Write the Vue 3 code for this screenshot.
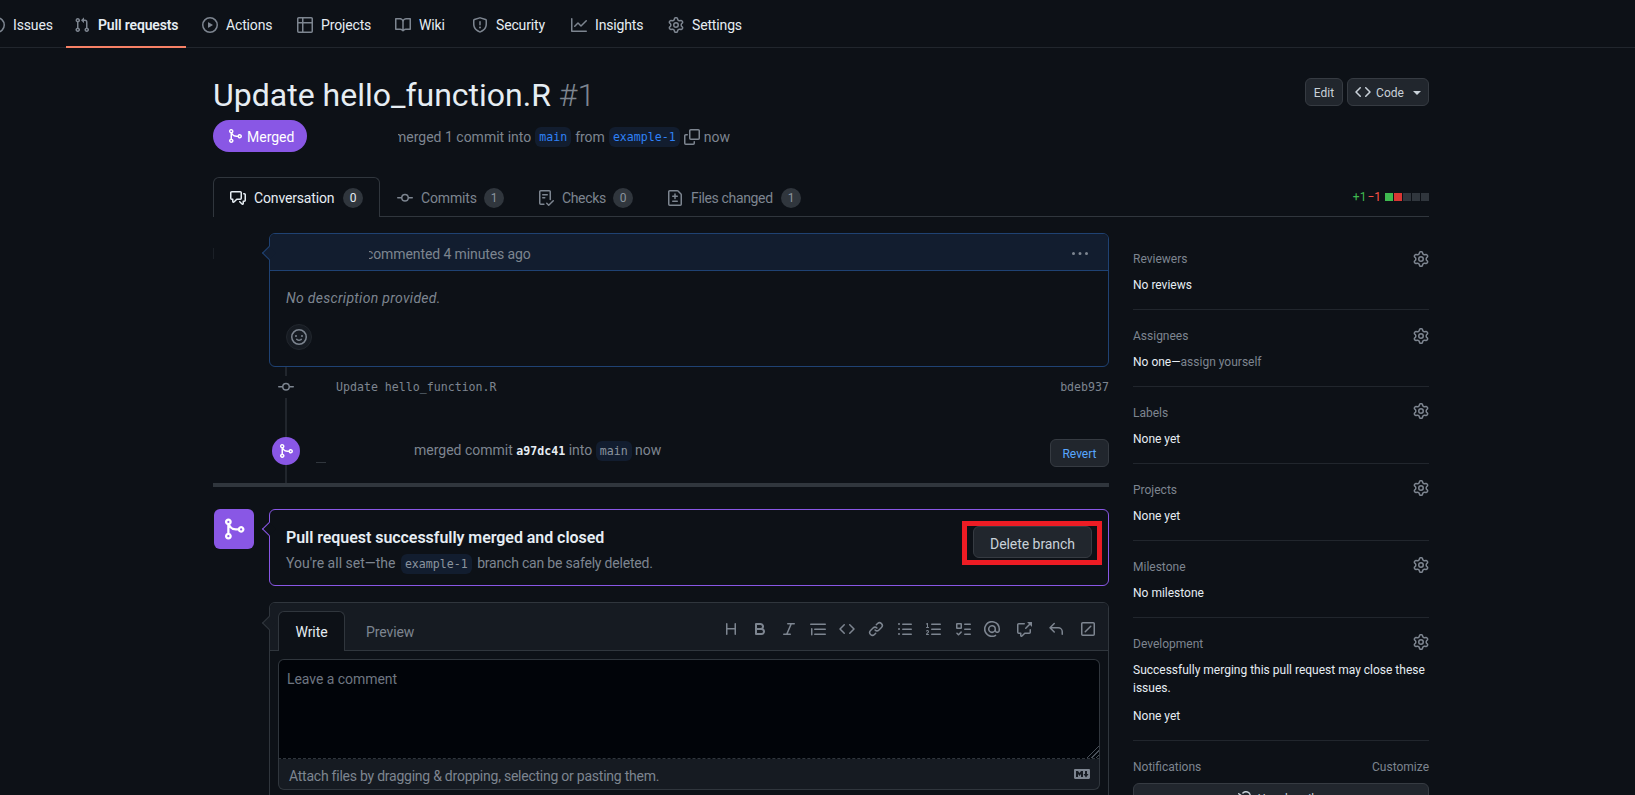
<script setup>
import { h } from 'vue'

const icons = {
  issue: 'M8 9.5a1.5 1.5 0 1 0 0-3 1.5 1.5 0 0 0 0 3Z M8 0a8 8 0 1 1 0 16A8 8 0 0 1 8 0ZM1.5 8a6.5 6.5 0 1 0 13 0 6.5 6.5 0 0 0-13 0Z',
  pull: 'M1.5 3.25a2.25 2.25 0 1 1 3 2.122v5.256a2.251 2.251 0 1 1-1.5 0V5.372A2.25 2.25 0 0 1 1.5 3.25Zm5.677-.177L9.573.677A.25.25 0 0 1 10 .854V2.5h1A2.5 2.5 0 0 1 13.5 5v5.628a2.251 2.251 0 1 1-1.5 0V5a1 1 0 0 0-1-1h-1v1.646a.25.25 0 0 1-.427.177L7.177 3.427a.25.25 0 0 1 0-.354ZM3.75 2.5a.75.75 0 1 0 0 1.5.75.75 0 0 0 0-1.5Zm0 9.5a.75.75 0 1 0 0 1.5.75.75 0 0 0 0-1.5Zm8.25.75a.75.75 0 1 0 1.5 0 .75.75 0 0 0-1.5 0Z',
  play: 'M8 0a8 8 0 1 1 0 16A8 8 0 0 1 8 0ZM1.5 8a6.5 6.5 0 1 0 13 0 6.5 6.5 0 0 0-13 0Zm4.879-2.773 4.264 2.559a.25.25 0 0 1 0 .428l-4.264 2.559A.25.25 0 0 1 6 10.559V5.442a.25.25 0 0 1 .379-.215Z',
  table: 'M0 1.75C0 .784.784 0 1.75 0h12.5C15.216 0 16 .784 16 1.75v12.5A1.75 1.75 0 0 1 14.25 16H1.75A1.75 1.75 0 0 1 0 14.25ZM6.5 6.5v8h7.75a.25.25 0 0 0 .25-.25V6.5Zm8-1.5V1.75a.25.25 0 0 0-.25-.25H6.5V5Zm-13 1.5v7.75c0 .138.112.25.25.25H5v-8ZM5 5V1.5H1.75a.25.25 0 0 0-.25.25V5Z',
  book: 'M0 1.75A.75.75 0 0 1 .75 1h4.253c1.227 0 2.317.59 3 1.501A3.743 3.743 0 0 1 11.006 1h4.245a.75.75 0 0 1 .75.75v10.5a.75.75 0 0 1-.75.75h-4.507a2.25 2.25 0 0 0-1.591.659l-.622.621a.75.75 0 0 1-1.06 0l-.622-.621A2.25 2.25 0 0 0 5.258 13H.75a.75.75 0 0 1-.75-.75Zm7.251 10.324.004-5.073-.002-2.253A2.25 2.25 0 0 0 5.003 2.5H1.5v9h3.757a3.75 3.75 0 0 1 1.994.574ZM8.755 4.75l-.004 7.322a3.752 3.752 0 0 1 1.992-.572H14.5v-9h-3.495a2.25 2.25 0 0 0-2.25 2.25Z',
  shield: 'M7.467.133a1.748 1.748 0 0 1 1.066 0l5.25 1.68A1.75 1.75 0 0 1 15 3.48V7c0 1.566-.32 3.182-1.303 4.682-.983 1.498-2.585 2.813-5.032 3.855a1.697 1.697 0 0 1-1.33 0c-2.447-1.042-4.049-2.357-5.032-3.855C1.32 10.182 1 8.566 1 7V3.48a1.75 1.75 0 0 1 1.217-1.667Zm.61 1.429a.25.25 0 0 0-.153 0l-5.25 1.68a.25.25 0 0 0-.174.238V7c0 1.358.275 2.666 1.057 3.86.784 1.194 2.121 2.34 4.366 3.297a.196.196 0 0 0 .154 0c2.245-.956 3.582-2.104 4.366-3.298C13.225 9.666 13.5 8.36 13.5 7V3.48a.251.251 0 0 0-.174-.237l-5.25-1.68ZM8.75 4.75v3a.75.75 0 0 1-1.5 0v-3a.75.75 0 0 1 1.5 0ZM9 10.5a1 1 0 1 1-2 0 1 1 0 0 1 2 0Z',
  graph: 'M1.5 1.75V13.5h13.75a.75.75 0 0 1 0 1.5H.75a.75.75 0 0 1-.75-.75V1.75a.75.75 0 0 1 1.5 0Zm14.28 2.53-5.25 5.25a.75.75 0 0 1-1.06 0L7 7.06 4.28 9.78a.751.751 0 0 1-1.042-.018.751.751 0 0 1-.018-1.042l3.25-3.25a.75.75 0 0 1 1.06 0L10 7.94l4.72-4.72a.751.751 0 0 1 1.042.018.751.751 0 0 1 .018 1.042Z',
  gear: 'M8 0a8.2 8.2 0 0 1 .701.031C9.444.095 9.99.645 10.16 1.29l.288 1.107c.018.066.079.158.212.224.231.114.454.243.668.386.123.082.233.09.299.071l1.103-.303c.644-.176 1.392.021 1.82.63.27.385.506.792.704 1.218.315.675.111 1.422-.364 1.891l-.814.806c-.049.048-.098.147-.088.294.016.257.016.515 0 .772-.01.147.038.246.088.294l.814.806c.475.469.679 1.216.364 1.891a7.977 7.977 0 0 1-.704 1.217c-.428.61-1.176.807-1.82.63l-1.102-.302c-.067-.019-.177-.011-.3.071a5.909 5.909 0 0 1-.668.386c-.133.066-.194.158-.211.224l-.29 1.106c-.168.646-.715 1.196-1.458 1.26a8.006 8.006 0 0 1-1.402 0c-.743-.064-1.289-.614-1.458-1.26l-.289-1.106c-.018-.066-.079-.158-.212-.224a5.738 5.738 0 0 1-.668-.386c-.123-.082-.233-.09-.299-.071l-1.103.303c-.644.176-1.392-.021-1.82-.63a8.12 8.12 0 0 1-.704-1.218c-.315-.675-.111-1.422.363-1.891l.815-.806c.05-.048.098-.147.088-.294a6.214 6.214 0 0 1 0-.772c.01-.147-.038-.246-.088-.294l-.815-.806C.635 6.045.431 5.298.746 4.623a7.92 7.92 0 0 1 .704-1.217c.428-.61 1.176-.807 1.82-.63l1.102.302c.067.019.177.011.3-.071.214-.143.437-.272.668-.386.133-.066.194-.158.211-.224l.29-1.106C6.009.645 6.556.095 7.299.03 7.53.01 7.764 0 8 0Zm-.571 1.525c-.036.003-.108.036-.137.146l-.289 1.105c-.147.561-.549.967-.998 1.189-.173.086-.34.183-.5.29-.417.278-.97.423-1.529.27l-1.103-.303c-.109-.03-.175.016-.195.045-.22.312-.412.644-.573.99-.014.031-.021.11.059.19l.815.806c.411.406.562.957.53 1.456a4.709 4.709 0 0 0 0 .582c.032.499-.119 1.05-.53 1.456l-.815.806c-.081.08-.073.159-.059.19.162.346.353.677.573.989.02.03.085.076.195.046l1.102-.303c.56-.153 1.113-.008 1.53.27.161.107.328.204.501.29.447.222.85.629.997 1.189l.289 1.105c.029.109.101.143.137.146a6.6 6.6 0 0 0 1.142 0c.036-.003.108-.036.137-.146l.289-1.105c.147-.561.549-.967.998-1.189.173-.086.34-.183.5-.29.417-.278.97-.423 1.529-.27l1.103.303c.109.029.175-.016.195-.045.22-.313.411-.644.573-.99.014-.031.021-.11-.059-.19l-.815-.806c-.411-.406-.562-.957-.53-1.456a4.709 4.709 0 0 0 0-.582c-.032-.499.119-1.05.53-1.456l.815-.806c.081-.08.073-.159.059-.19a6.464 6.464 0 0 0-.573-.989c-.02-.03-.085-.076-.195-.046l-1.102.303c-.56.153-1.113.008-1.53-.27a4.44 4.44 0 0 0-.501-.29c-.447-.222-.85-.629-.997-1.189l-.289-1.105c-.029-.11-.101-.143-.137-.146a6.6 6.6 0 0 0-1.142 0ZM11 8a3 3 0 1 1-6 0 3 3 0 0 1 6 0ZM9.5 8a1.5 1.5 0 1 0-3.001.001A1.5 1.5 0 0 0 9.5 8Z',
  code: 'm11.28 3.22 4.25 4.25a.75.75 0 0 1 0 1.06l-4.25 4.25a.749.749 0 0 1-1.275-.326.749.749 0 0 1 .215-.734L13.94 8l-3.72-3.72a.749.749 0 0 1 .326-1.275.749.749 0 0 1 .734.215Zm-6.56 0a.751.751 0 0 1 1.042.018.751.751 0 0 1 .018 1.042L2.06 8l3.72 3.72a.749.749 0 0 1-.326 1.275.749.749 0 0 1-.734-.215L.47 8.53a.75.75 0 0 1 0-1.06Z',
  merge: 'M5.45 5.154A4.25 4.25 0 0 0 9.25 7.5h1.378a2.251 2.251 0 1 1 0 1.5H9.25A5.734 5.734 0 0 1 5 7.123v3.505a2.25 2.25 0 1 1-1.5 0V5.372a2.25 2.25 0 1 1 1.95-.218ZM4.25 13.5a.75.75 0 1 0 0-1.5.75.75 0 0 0 0 1.5Zm8.5-4.5a.75.75 0 1 0 0-1.5.75.75 0 0 0 0 1.5ZM5 3.25a.75.75 0 1 0 0 .005V3.25Z',
  discussion: 'M1.75 1h8.5c.966 0 1.75.784 1.75 1.75v5.5A1.75 1.75 0 0 1 10.25 10H7.061l-2.574 2.573A1.458 1.458 0 0 1 2 11.543V10h-.25A1.75 1.75 0 0 1 0 8.25v-5.5C0 1.784.784 1 1.75 1ZM1.5 2.75v5.5c0 .138.112.25.25.25h1a.75.75 0 0 1 .75.75v2.19l2.72-2.72a.749.749 0 0 1 .53-.22h3.5a.25.25 0 0 0 .25-.25v-5.5a.25.25 0 0 0-.25-.25h-8.5a.25.25 0 0 0-.25.25Zm13 2a.25.25 0 0 0-.25-.25h-.5a.75.75 0 0 1 0-1.5h.5c.966 0 1.75.784 1.75 1.75v5.5A1.75 1.75 0 0 1 14.25 12H14v1.543a1.458 1.458 0 0 1-2.487 1.03L9.22 12.28a.749.749 0 0 1 .326-1.275.749.749 0 0 1 .734.215l2.22 2.22v-2.19a.75.75 0 0 1 .75-.75h1a.25.25 0 0 0 .25-.25Z',
  commit: 'M11.93 8.5a4.002 4.002 0 0 1-7.86 0H.75a.75.75 0 0 1 0-1.5h3.32a4.002 4.002 0 0 1 7.86 0h3.32a.75.75 0 0 1 0 1.5Zm-1.43-.75a2.5 2.5 0 1 0-5 0 2.5 2.5 0 0 0 5 0Z',
  checklist: 'M2.5 1.75v11.5c0 .138.112.25.25.25h3.17a.75.75 0 0 1 0 1.5H2.75A1.75 1.75 0 0 1 1 13.25V1.75C1 .784 1.784 0 2.75 0h8.5C12.216 0 13 .784 13 1.75v7.736a.75.75 0 0 1-1.5 0V1.75a.25.25 0 0 0-.25-.25h-8.5a.25.25 0 0 0-.25.25Zm13.274 9.537v-.001l-4.557 4.45a.75.75 0 0 1-1.055-.008l-1.943-1.95a.75.75 0 0 1 1.062-1.058l1.419 1.425 4.026-3.932a.75.75 0 1 1 1.048 1.074ZM4.75 4h4.5a.75.75 0 0 1 0 1.5h-4.5a.75.75 0 0 1 0-1.5ZM4 7.75A.75.75 0 0 1 4.75 7h2a.75.75 0 0 1 0 1.5h-2A.75.75 0 0 1 4 7.75Z',
  filediff: 'M1 1.75C1 .784 1.784 0 2.75 0h7.586c.464 0 .909.184 1.237.513l2.914 2.914c.329.328.513.773.513 1.237v9.586A1.75 1.75 0 0 1 13.25 16H2.75A1.75 1.75 0 0 1 1 14.25Zm1.75-.25a.25.25 0 0 0-.25.25v12.5c0 .138.112.25.25.25h10.5a.25.25 0 0 0 .25-.25V4.664a.25.25 0 0 0-.073-.177l-2.914-2.914a.25.25 0 0 0-.177-.073ZM8 3.25a.75.75 0 0 1 .75.75v1.5h1.5a.75.75 0 0 1 0 1.5h-1.5v1.5a.75.75 0 0 1-1.5 0V7h-1.5a.75.75 0 0 1 0-1.5h1.5V4A.75.75 0 0 1 8 3.25Zm-3 8a.75.75 0 0 1 .75-.75h4.5a.75.75 0 0 1 0 1.5h-4.5a.75.75 0 0 1-.75-.75Z',
  copy: 'M0 6.75C0 5.784.784 5 1.75 5h1.5a.75.75 0 0 1 0 1.5h-1.5a.25.25 0 0 0-.25.25v7.5c0 .138.112.25.25.25h7.5a.25.25 0 0 0 .25-.25v-1.5a.75.75 0 0 1 1.5 0v1.5A1.75 1.75 0 0 1 9.25 16h-7.5A1.75 1.75 0 0 1 0 14.25Z M5 1.75C5 .784 5.784 0 6.75 0h7.5C15.216 0 16 .784 16 1.75v7.5A1.75 1.75 0 0 1 14.25 11h-7.5A1.75 1.75 0 0 1 5 9.25Zm1.75-.25a.25.25 0 0 0-.25.25v7.5c0 .138.112.25.25.25h7.5a.25.25 0 0 0 .25-.25v-7.5a.25.25 0 0 0-.25-.25Z',
  smiley: 'M8 0a8 8 0 1 1 0 16A8 8 0 0 1 8 0ZM1.5 8a6.5 6.5 0 1 0 13 0 6.5 6.5 0 0 0-13 0Zm3.82 1.636a.75.75 0 0 1 1.038.175l.007.009c.103.118.22.222.35.31.264.178.683.37 1.285.37.602 0 1.02-.192 1.285-.371.13-.088.247-.192.35-.31l.007-.008a.75.75 0 0 1 1.222.87l-.022-.015c.02.013.021.015.021.015v.001l-.001.002-.002.003-.005.007-.014.019a2.066 2.066 0 0 1-.184.213c-.16.166-.338.316-.53.445-.63.418-1.37.638-2.127.629-.946 0-1.652-.308-2.126-.63a3.331 3.331 0 0 1-.715-.657l-.014-.02-.005-.006-.002-.003v-.002h-.001l.613-.432-.614.43a.75.75 0 0 1 .183-1.044ZM12 7a1 1 0 1 1-2 0 1 1 0 0 1 2 0ZM5 8a1 1 0 1 1 0-2 1 1 0 0 1 0 2Zm5.25 2.25.592.416a97.71 97.71 0 0 0-.592-.416Z',
  kebab: 'M8 9a1.5 1.5 0 1 0 0-3 1.5 1.5 0 0 0 0 3ZM1.5 9a1.5 1.5 0 1 0 0-3 1.5 1.5 0 0 0 0 3Zm13 0a1.5 1.5 0 1 0 0-3 1.5 1.5 0 0 0 0 3Z',
  heading: 'M3.75 2a.75.75 0 0 1 .75.75V7h7V2.75a.75.75 0 0 1 1.5 0v10.5a.75.75 0 0 1-1.5 0V8.5h-7v4.75a.75.75 0 0 1-1.5 0V2.75A.75.75 0 0 1 3.75 2Z',
  bold: 'M4 2h4.5a3.501 3.501 0 0 1 2.852 5.53A3.499 3.499 0 0 1 9.5 14H4a1 1 0 0 1-1-1V3a1 1 0 0 1 1-1Zm1 7v3h4.5a1.5 1.5 0 0 0 0-3Zm3.5-2a1.5 1.5 0 0 0 0-3H5v3Z',
  italic: 'M6 2.75A.75.75 0 0 1 6.75 2h6.5a.75.75 0 0 1 0 1.5h-2.505l-3.858 9H9.25a.75.75 0 0 1 0 1.5h-6.5a.75.75 0 0 1 0-1.5h2.505l3.858-9H6.75A.75.75 0 0 1 6 2.75Z',
  quote: 'M.75 2.5h14.5a.75.75 0 0 1 0 1.5H.75a.75.75 0 0 1 0-1.5Zm4 5h10.5a.75.75 0 0 1 0 1.5H4.75a.75.75 0 0 1 0-1.5Zm0 5h10.5a.75.75 0 0 1 0 1.5H4.75a.75.75 0 0 1 0-1.5ZM2.5 7.75v6a.75.75 0 0 1-1.5 0v-6a.75.75 0 0 1 1.5 0Z',
  link: 'm7.775 3.275 1.25-1.25a3.5 3.5 0 1 1 4.95 4.95l-2.5 2.5a3.5 3.5 0 0 1-4.95 0 .751.751 0 0 1 .018-1.042.751.751 0 0 1 1.042-.018 1.998 1.998 0 0 0 2.83 0l2.5-2.5a2.002 2.002 0 0 0-2.83-2.83l-1.25 1.25a.751.751 0 0 1-1.042-.018.751.751 0 0 1-.018-1.042Zm-4.69 9.64a1.998 1.998 0 0 0 2.83 0l1.25-1.25a.751.751 0 0 1 1.042.018.751.751 0 0 1 .018 1.042l-1.25 1.25a3.5 3.5 0 1 1-4.95-4.95l2.5-2.5a3.5 3.5 0 0 1 4.95 0 .751.751 0 0 1-.018 1.042.751.751 0 0 1-1.042.018 1.998 1.998 0 0 0-2.83 0l-2.5 2.5a1.998 1.998 0 0 0 0 2.83Z',
  ul: 'M5.75 2.5h8.5a.75.75 0 0 1 0 1.5h-8.5a.75.75 0 0 1 0-1.5Zm0 5h8.5a.75.75 0 0 1 0 1.5h-8.5a.75.75 0 0 1 0-1.5Zm0 5h8.5a.75.75 0 0 1 0 1.5h-8.5a.75.75 0 0 1 0-1.5ZM2 14a1 1 0 1 1 0-2 1 1 0 0 1 0 2Zm1-6a1 1 0 1 1-2 0 1 1 0 0 1 2 0ZM2 4a1 1 0 1 1 0-2 1 1 0 0 1 0 2Z',
  ol: 'M5 3.25a.75.75 0 0 1 .75-.75h8.5a.75.75 0 0 1 0 1.5h-8.5A.75.75 0 0 1 5 3.25Zm0 5a.75.75 0 0 1 .75-.75h8.5a.75.75 0 0 1 0 1.5h-8.5A.75.75 0 0 1 5 8.25Zm0 5a.75.75 0 0 1 .75-.75h8.5a.75.75 0 0 1 0 1.5h-8.5a.75.75 0 0 1-.75-.75ZM.924 10.32a.5.5 0 0 1-.851-.525l.001-.001.001-.002.002-.004.007-.011c.097-.144.215-.273.348-.384.228-.19.588-.392 1.068-.392.468 0 .858.181 1.126.484.259.294.377.673.377 1.038 0 .987-.686 1.495-1.156 1.845l-.047.035c-.303.225-.522.4-.654.597h1.357a.5.5 0 0 1 0 1H.5a.5.5 0 0 1-.5-.5c0-1.005.692-1.52 1.167-1.875l.035-.025c.531-.396.8-.625.8-1.078a.57.57 0 0 0-.128-.376C1.806 10.068 1.695 10 1.5 10a.658.658 0 0 0-.429.163.835.835 0 0 0-.144.153ZM2.003 2.5V6h.503a.5.5 0 0 1 0 1H.5a.5.5 0 0 1 0-1h.503V3.308l-.28.14a.5.5 0 0 1-.446-.895l1.003-.5a.5.5 0 0 1 .723.447Z',
  tasklist: 'M2 2h4a1 1 0 0 1 1 1v4a1 1 0 0 1-1 1H2a1 1 0 0 1-1-1V3a1 1 0 0 1 1-1Zm4.655 8.595a.75.75 0 0 1 0 1.06L4.03 14.28a.75.75 0 0 1-1.06 0l-1.5-1.5a.749.749 0 0 1 .326-1.275.749.749 0 0 1 .734.215l.97.97 2.095-2.095a.75.75 0 0 1 1.06 0ZM9.75 2.5h5.5a.75.75 0 0 1 0 1.5h-5.5a.75.75 0 0 1 0-1.5Zm0 5h5.5a.75.75 0 0 1 0 1.5h-5.5a.75.75 0 0 1 0-1.5Zm0 5h5.5a.75.75 0 0 1 0 1.5h-5.5a.75.75 0 0 1 0-1.5Zm-7.25-9v3h3v-3Z',
  mention: 'M4.75 2.37a6.501 6.501 0 0 0 6.5 11.26.75.75 0 0 1 .75 1.298A7.999 7.999 0 0 1 .989 4.148 8 8 0 0 1 16 7.75v1.5a2.75 2.75 0 0 1-5.072 1.475 3.999 3.999 0 0 1-6.65-4.19A4 4 0 0 1 12 8v1.25a1.25 1.25 0 0 0 2.5 0V7.867a6.5 6.5 0 0 0-9.75-5.496ZM10.5 8a2.5 2.5 0 1 0-5 0 2.5 2.5 0 0 0 5 0Z',
  crossref: 'M2.75 3.5a.25.25 0 0 0-.25.25v7.5c0 .138.112.25.25.25h2a.75.75 0 0 1 .75.75v2.19l2.72-2.72a.749.749 0 0 1 .53-.22h4.5a.25.25 0 0 0 .25-.25v-2.5a.75.75 0 0 1 1.5 0v2.5A1.75 1.75 0 0 1 13.25 13H9.06l-2.573 2.573A1.458 1.458 0 0 1 4 14.543V13H2.75A1.75 1.75 0 0 1 1 11.25v-7.5C1 2.784 1.784 2 2.75 2h5.5a.75.75 0 0 1 0 1.5ZM16 1.25v4.146a.25.25 0 0 1-.427.177L14.03 4.03l-3.75 3.75a.749.749 0 0 1-1.275-.326.749.749 0 0 1 .215-.734l3.75-3.75-1.543-1.543A.25.25 0 0 1 11.604 1h4.146a.25.25 0 0 1 .25.25Z',
  reply: 'M6.78 1.97a.75.75 0 0 1 0 1.06L3.81 6h6.44A4.75 4.75 0 0 1 15 10.75v2.5a.75.75 0 0 1-1.5 0v-2.5a3.25 3.25 0 0 0-3.25-3.25H3.81l2.97 2.97a.749.749 0 0 1-.326 1.275.749.749 0 0 1-.734-.215L1.47 7.28a.75.75 0 0 1 0-1.06l4.25-4.25a.75.75 0 0 1 1.06 0Z',
  slash: 'M13.25 1c.966 0 1.75.784 1.75 1.75v10.5A1.75 1.75 0 0 1 13.25 15H2.75A1.75 1.75 0 0 1 1 13.25V2.75C1 1.784 1.784 1 2.75 1ZM2.75 2.5a.25.25 0 0 0-.25.25v10.5c0 .138.112.25.25.25h10.5a.25.25 0 0 0 .25-.25V2.75a.25.25 0 0 0-.25-.25Zm8.53 3.28-5.5 5.5a.749.749 0 0 1-1.275-.326.749.749 0 0 1 .215-.734l5.5-5.5a.749.749 0 0 1 1.275.326.749.749 0 0 1-.215.734Z',
  markdown: 'M14.85 3c.63 0 1.15.52 1.14 1.15v7.7c0 .63-.51 1.15-1.15 1.15H1.15C.52 13 0 12.48 0 11.84V4.15C0 3.52.52 3 1.15 3ZM9 11V5H7L5.5 7 4 5H2v6h2V8l1.5 1.92L7 8v3Zm2.99.5L14.5 8H13V5h-2v3H9.5Z',
  bellslash: 'm4.182 4.31.016.011 10.104 7.316.013.01 1.375.996a.75.75 0 1 1-.88 1.214L13.626 13H2.518a1.516 1.516 0 0 1-1.263-2.36l1.703-2.554A.255.255 0 0 0 3 7.947V5.305L.31 3.357a.75.75 0 1 1 .88-1.214Zm7.373 7.19L4.5 6.391v1.556c0 .346-.102.683-.294.97l-1.703 2.556a.017.017 0 0 0-.003.01c0 .005.002.009.005.012l.006.004.007.001ZM8 1.5c-.997 0-1.895.416-2.534 1.086A.75.75 0 0 1 4.38 1.55 5 5 0 0 1 13 5v2.373a.75.75 0 0 1-1.5 0V5A3.5 3.5 0 0 0 8 1.5ZM8 16a2 2 0 0 1-1.985-1.75c-.017-.137.097-.25.235-.25h3.5c.138 0 .252.113.235.25A2 2 0 0 1 8 16Z',
}

const Oct = (props) =>
  h('svg', { class: 'oct', viewBox: '0 0 16 16', width: props.size || 16, height: props.size || 16 }, [
    h('path', { d: icons[props.name], 'fill-rule': 'evenodd' }),
  ])
Oct.props = ['name', 'size']

// w = width of the label, so the items keep their places whatever the font does
const navItems = [
  { label: 'Issues', icon: 'issue', w: 37 },
  { label: 'Pull requests', icon: 'pull', w: 80, active: true },
  { label: 'Actions', icon: 'play', w: 47 },
  { label: 'Projects', icon: 'table', w: 50 },
  { label: 'Wiki', icon: 'book', w: 29 },
  { label: 'Security', icon: 'shield', w: 51 },
  { label: 'Insights', icon: 'graph', w: 49 },
  { label: 'Settings', icon: 'gear', w: 50 },
]

const tabs = [
  { label: 'Conversation', icon: 'discussion', count: 0, w: 81, active: true },
  { label: 'Commits', icon: 'commit', count: 1, w: 55 },
  { label: 'Checks', icon: 'checklist', count: 0, w: 43 },
  { label: 'Files changed', icon: 'filediff', count: 1, w: 82 },
]

const tools = ['heading', 'bold', 'italic', 'quote', 'code', 'link', 'ul', 'ol', 'tasklist', 'mention', 'crossref', 'reply', 'slash']

const sidebar = [
  { title: 'Reviewers', value: 'No reviews' },
  { title: 'Assignees', value: 'No one', hint: 'assign yourself' },
  { title: 'Labels', value: 'None yet' },
  { title: 'Projects', value: 'None yet' },
  { title: 'Milestone', value: 'No milestone' },
  { title: 'Development', note: 'Successfully merging this pull request may close these issues.', value: 'None yet' },
]
</script>

<template>
  <div class="page">
    <nav class="repo-nav">
      <a v-for="item in navItems" :key="item.label" class="nav-item" :class="{ active: item.active }">
        <Oct :name="item.icon" class="nav-icon" />
        <span class="fixed" :style="{ width: item.w + 'px' }">{{ item.label }}</span>
      </a>
    </nav>

    <main class="container">
      <header class="title-row">
        <h1>Update hello_function.R <span class="num">#1</span></h1>
        <div class="title-actions">
          <button class="btn small edit-btn">Edit</button>
          <button class="btn small code-btn">
            <Oct name="code" />
            <span>Code</span>
            <i class="caret-down"></i>
          </button>
        </div>
      </header>

      <div class="meta-row">
        <span class="state"><Oct name="merge" /><span>Merged</span></span>
        <span class="meta-text">
          <span class="cut"><span class="cut-m">merged 1 commit into</span></span>
          <code class="chip link">main</code>
          <span>from</span>
          <code class="chip link">example-1</code>
          <Oct name="copy" class="copy" />
          <span>now</span>
        </span>
      </div>

      <div class="tabs">
        <a v-for="tab in tabs" :key="tab.label" class="tab" :class="{ active: tab.active }">
          <Oct :name="tab.icon" />
          <span class="fixed" :style="{ width: tab.w + 'px' }">{{ tab.label }}</span>
          <span class="counter">{{ tab.count }}</span>
        </a>
        <div class="diffstat">
          <span class="plus">+1</span>
          <span class="minus">−1</span>
          <span class="blocks"><i class="g"></i><i class="r"></i><i></i><i></i><i></i></span>
        </div>
      </div>

      <div class="columns">
        <section class="discussion">
          <div class="tl-box comment">
            <div class="comment-head">
              <span class="cut"><span class="cut-c">commented 4 minutes ago</span></span>
              <Oct name="kebab" class="kebab" />
            </div>
            <div class="comment-body">
              <em>No description provided.</em>
              <button class="react"><Oct name="smiley" /></button>
            </div>
          </div>

          <div class="timeline">
            <div class="commit-row">
              <span class="commit-icon"><Oct name="commit" /></span>
              <code class="commit-msg">Update hello_function.R</code>
              <code class="sha">bdeb937</code>
            </div>
            <div class="merged-row">
              <span class="merged-badge"><Oct name="merge" /></span>
              <span class="merged-text">
                merged commit <code class="strong-sha">a97dc41</code> into
                <code class="chip">main</code> now
              </span>
              <button class="btn revert">Revert</button>
            </div>
          </div>
          <div class="thick-rule"></div>

          <div class="merge-row">
            <span class="merge-avatar"><Oct name="merge" :size="24" /></span>
            <div class="tl-box merge-box">
              <div>
                <h3>Pull request successfully merged and closed</h3>
                <p>You're all set—the <code class="chip">example-1</code> <span class="tail">branch can be safely deleted.</span></p>
              </div>
              <button class="btn delete">Delete branch</button>
              <div class="annotation"></div>
            </div>
          </div>

          <div class="tl-box editor">
            <div class="editor-head">
              <div class="editor-tabs">
                <span class="etab on">Write</span>
                <span class="etab">Preview</span>
              </div>
              <div class="toolbar">
                <Oct v-for="t in tools" :key="t" :name="t" />
              </div>
            </div>
            <div class="editor-body">
              <div class="textarea">
                <span>Leave a comment</span>
                <i class="grip"></i>
              </div>
              <div class="attach">
                <span>Attach files by dragging &amp; dropping, selecting or pasting them.</span>
                <Oct name="markdown" />
              </div>
            </div>
          </div>
        </section>

        <aside class="sidebar">
          <div v-for="s in sidebar" :key="s.title" class="side-section">
            <div class="side-head">
              <span>{{ s.title }}</span>
              <Oct name="gear" />
            </div>
            <p v-if="s.note" class="note">{{ s.note }}</p>
            <div class="side-value">{{ s.value }}<span v-if="s.hint" class="hint"><b>—</b>{{ s.hint }}</span></div>
          </div>
          <div class="side-notify">
            <div class="side-head">
              <span>Notifications</span>
              <span class="customize">Customize</span>
            </div>
            <button class="btn unsub"><Oct name="bellslash" /><span>Unsubscribe</span></button>
          </div>
        </aside>
      </div>
    </main>
  </div>
</template>

<style scoped>
.page {
  height: 795px;
  overflow: hidden;
  background: #0d1117;
  color: #e6edf3;
  font-size: 14px;
}

.repo-nav {
  display: flex;
  gap: 8px;
  height: 48px;
  margin-left: -19px;
  padding-left: 0;
  border-bottom: 1px solid #21262d;
  box-sizing: border-box;
}
.nav-item {
  display: flex;
  align-items: center;
  gap: 8px;
  padding: 4px 8px 0;
  height: 48px;
  box-sizing: border-box;
  border-bottom: 2px solid transparent;
}
.nav-item .nav-icon {
  color: #7d8590;
}
.nav-item.active {
  font-weight: 600;
  border-bottom-color: #f78166;
}
.fixed {
  display: block;
  white-space: nowrap;
  letter-spacing: -0.15px;
}

.container {
  width: 1216px;
  margin-left: 213px;
}

.title-row {
  display: flex;
  justify-content: space-between;
  margin-top: 27px;
  height: 40px;
}
h1 {
  margin: 0;
  font-size: 32px;
  font-weight: 400;
  line-height: 40px;
}
.num {
  color: #7d8590;
  font-weight: 300;
}
.title-actions {
  display: flex;
  gap: 4px;
  margin-top: 3px;
}

.btn {
  font: inherit;
  color: #c9d1d9;
  background: #21262d;
  border: 1px solid #363b42;
  border-radius: 6px;
  padding: 0 16px;
  height: 32px;
  box-sizing: border-box;
}
.btn.small {
  display: flex;
  align-items: center;
  justify-content: center;
  height: 28px;
  padding: 1px 0 0;
  font-size: 12px;
}
.edit-btn {
  width: 38px;
}
.code-btn {
  width: 82px;
  gap: 5px;
}
.code-btn .oct {
  margin-top: -1px;
}
.code-btn .caret-down {
  width: 0;
  height: 0;
  margin-left: 4px;
  border: 4px solid transparent;
  border-top-color: #c9d1d9;
  border-bottom: 0;
}

.meta-row {
  display: flex;
  align-items: center;
  margin-top: 5px;
  height: 32px;
}
.state {
  display: flex;
  align-items: center;
  gap: 4px;
  width: 94px;
  height: 32px;
  box-sizing: border-box;
  padding-left: 14px;
  border-radius: 16px;
  background: #8957e5;
  color: #fff;
}
.state span {
  padding-top: 2px;
}
.meta-text {
  display: flex;
  align-items: center;
  gap: 4px;
  margin-left: 91px;
  padding-top: 2px;
  color: #7d8590;
}
.cut {
  display: inline-block;
  overflow: hidden;
  white-space: nowrap;
}
.cut-m,
.cut-c {
  display: inline-block;
}
.cut-m {
  margin-left: -4px;
}
.cut-c {
  margin-left: -3px;
  letter-spacing: -0.1px;
}
.chip {
  display: inline-block;
  padding: 0 4px;
  height: 20px;
  line-height: 20px;
  border-radius: 6px;
  background: #121d2f;
  color: #8b949e;
  font-family: "DejaVu Sans Mono", monospace;
  font-size: 11.6px;
}
.chip.link {
  color: #2f81f7;
}
.copy {
  color: #7d8590;
}

.tabs {
  display: flex;
  align-items: flex-end;
  margin-top: 25px;
  height: 40px;
  box-sizing: border-box;
  border-bottom: 1px solid #30363d;
}
.tab {
  display: flex;
  align-items: center;
  gap: 8px;
  height: 40px;
  box-sizing: border-box;
  padding: 0 16px;
  color: #7d8590;
  border: 1px solid transparent;
  border-bottom: 0;
  margin-bottom: -1px;
}
.tab:nth-child(n+3) .fixed {
  letter-spacing: -0.35px;
}
.tab.active {
  color: #e6edf3;
  background: #0d1117;
  border-color: #30363d;
  border-radius: 6px 6px 0 0;
}
.counter {
  width: 20px;
  height: 20px;
  line-height: 20px;
  text-align: center;
  border-radius: 10px;
  background: #30363d;
  color: #8b949e;
  font-size: 12px;
}
.tab.active .counter {
  color: #e6edf3;
}
.diffstat {
  display: flex;
  align-items: center;
  gap: 4px;
  margin-left: auto;
  height: 39px;
  font-size: 12px;
}
.plus {
  color: #3fb950;
}
.minus {
  margin-left: -3px;
  color: #f85149;
}
.blocks {
  display: flex;
  gap: 1px;
}
.blocks i {
  width: 8px;
  height: 8px;
  background: #30363d;
}
.blocks .g {
  background: #3fb950;
}
.blocks .r {
  background: #da3633;
}

.columns {
  display: flex;
  gap: 24px;
  margin-top: 16px;
}
.discussion {
  width: 896px;
  flex: none;
}
.sidebar {
  width: 296px;
  flex: none;
}

.tl-box {
  position: relative;
  box-sizing: border-box;
  margin-left: 56px;
  width: 840px;
  border: 1px solid #30363d;
  border-radius: 6px;
}
.tl-box::before {
  content: "";
  position: absolute;
  left: -6px;
  width: 9px;
  height: 9px;
  transform: rotate(45deg);
  border-left: 1px solid #30363d;
  border-bottom: 1px solid #30363d;
  background: #0d1117;
}

.comment {
  height: 134px;
  border-color: #1f4273;
}
.comment::before {
  top: 14px;
  border-color: #1f4273;
  background: #121d2f;
}
/* what is left of the avatar beside the comment */
.comment::after {
  content: "";
  position: absolute;
  left: -57px;
  top: 14px;
  width: 1px;
  height: 11px;
  background: #1b2027;
}
.comment-head {
  display: flex;
  align-items: center;
  justify-content: space-between;
  height: 37px;
  box-sizing: border-box;
  padding: 3px 20px 0 99px;
  background: #121d2f;
  border-bottom: 1px solid #1f4273;
  border-radius: 5px 5px 0 0;
  color: #7d8590;
}
.kebab {
  color: #7d8590;
}
.comment-body {
  padding: 16px;
}
.comment-body em {
  display: block;
  padding-top: 1px;
  color: #7d8590;
  line-height: 21px;
  letter-spacing: 0.3px;
}
.react {
  display: flex;
  align-items: center;
  justify-content: center;
  width: 26px;
  height: 26px;
  margin-top: 15px;
  padding: 0;
  background: #161b22;
  border: 1px solid #21262d;
  border-radius: 13px;
  color: #7d8590;
}

.timeline {
  position: relative;
  height: 116px;
}
.timeline::before {
  content: "";
  position: absolute;
  left: 72px;
  top: 0;
  bottom: 0;
  width: 2px;
  background: #21262d;
}
.commit-row {
  position: relative;
  display: flex;
  align-items: center;
  height: 40px;
  padding-left: 65px;
  color: #7d8590;
}
.commit-icon {
  background: #0d1117;
  padding: 3px 0;
  margin-right: 42px;
}
.commit-msg,
.sha {
  font-family: "DejaVu Sans Mono", monospace;
  font-size: 11.6px;
}
.sha {
  margin-left: auto;
}
.merged-row {
  position: relative;
  display: flex;
  align-items: center;
  height: 28px;
  margin-top: 30px;
  padding-left: 59px;
}
.merged-row::after {
  content: "";
  position: absolute;
  left: 103px;
  top: 25px;
  width: 10px;
  height: 1px;
  background: #30363d;
}
.merged-badge {
  display: flex;
  align-items: center;
  justify-content: center;
  width: 28px;
  height: 28px;
  border-radius: 14px;
  background: #8957e5;
  color: #fff;
}
.merged-text {
  margin-left: 114px;
  color: #7d8590;
}
.strong-sha {
  color: #e6edf3;
  font-family: "DejaVu Sans Mono", monospace;
  font-size: 11.6px;
  font-weight: 700;
}
.btn.revert {
  margin-left: auto;
  margin-top: 4px;
  height: 28px;
  padding: 1px 0 0;
  width: 59px;
  font-size: 12px;
  color: #58a6ff;
}
.thick-rule {
  height: 4px;
  background: #30363d;
}

.merge-row {
  display: flex;
  margin-top: 22px;
}
.merge-avatar {
  display: flex;
  align-items: center;
  justify-content: center;
  width: 40px;
  height: 40px;
  margin-left: 1px;
  border-radius: 6px;
  background: #8957e5;
  color: #fff;
}
.merge-box {
  display: flex;
  justify-content: space-between;
  align-items: flex-start;
  height: 77px;
  margin-left: 15px;
  padding: 16px;
  border-color: #8957e5;
}
.merge-box::before {
  top: 14px;
  border-color: #8957e5;
}
.merge-box h3 {
  margin: 0;
  font-size: 16px;
  font-weight: 600;
  line-height: 24px;
  letter-spacing: -0.05px;
}
.merge-box p {
  margin: 3px 0 0;
  color: #7d8590;
  line-height: 20px;
}
.merge-box .chip {
  margin: 0 2px;
}
.tail {
  letter-spacing: -0.2px;
}
.annotation {
  position: absolute;
  top: 11px;
  right: 6px;
  width: 140px;
  height: 44px;
  box-sizing: border-box;
  border: 5px solid #ed1c24;
}
.btn.delete {
  width: 119px;
  padding: 3px 0 0;
  letter-spacing: -0.05px;
}

.editor {
  margin-top: 16px;
  height: 260px;
}
.editor::before {
  top: 15px;
  background: #161b22;
}
.editor-head {
  display: flex;
  justify-content: space-between;
  height: 48px;
  box-sizing: border-box;
  padding: 8px 12px 0 8px;
  background: #161b22;
  border-bottom: 1px solid #30363d;
  border-radius: 5px 5px 0 0;
}
.editor-tabs {
  display: flex;
}
.etab {
  display: flex;
  align-items: center;
  justify-content: center;
  height: 40px;
  box-sizing: border-box;
  padding: 0 16px;
  color: #7d8590;
  border: 1px solid transparent;
  border-bottom: 0;
  letter-spacing: -0.1px;
}
.etab.on {
  width: 67px;
  padding: 0;
  margin-right: 4px;
  color: #e6edf3;
  background: #0d1117;
  border-color: #30363d;
  border-radius: 6px 6px 0 0;
}
.toolbar {
  display: flex;
  align-items: center;
  gap: 13px;
  height: 36px;
  color: #7d8590;
}
.editor-body {
  padding: 8px;
}
.textarea {
  position: relative;
  height: 100px;
  box-sizing: border-box;
  padding: 11px 8px 0;
  background: #010409;
  border: 1px solid #30363d;
  border-bottom: 1px dashed #30363d;
  border-radius: 6px 6px 0 0;
  color: #6e7681;
  letter-spacing: -0.05px;
}
.grip {
  position: absolute;
  right: 0;
  bottom: 0;
  width: 14px;
  height: 14px;
  background: repeating-linear-gradient(135deg, transparent 0 2px, #484f58 2px 3px);
  clip-path: polygon(100% 0, 100% 100%, 0 100%);
}
.attach {
  display: flex;
  align-items: center;
  justify-content: space-between;
  height: 31px;
  box-sizing: border-box;
  padding: 4px 9px 0 10px;
  background: #161b22;
  border: 1px solid #30363d;
  border-top: 0;
  border-radius: 0 0 6px 6px;
  color: #7d8590;
  letter-spacing: -0.24px;
}
.attach .oct {
  margin-bottom: 4px;
}

.side-section {
  padding: 17px 0 15px;
  border-bottom: 1px solid #21262d;
  font-size: 12px;
  line-height: 18px;
}
.side-head {
  display: flex;
  align-items: center;
  justify-content: space-between;
  height: 18px;
  color: #7d8590;
  font-size: 12px;
}
.side-value {
  margin-top: 8px;
}
.note {
  margin: 8px 0 10px;
}
.note + .side-value {
  margin-top: 0;
}
.hint {
  color: #7d8590;
}
.hint b {
  color: #e6edf3;
  font-weight: 400;
}
.side-notify {
  padding-top: 17px;
}
.btn.unsub {
  display: flex;
  align-items: center;
  justify-content: center;
  gap: 4px;
  width: 100%;
  margin-top: 7px;
  font-size: 12px;
}
</style>

<style>
html,
body {
  background: #0d1117;
  overflow: hidden;
}
body {
  font-family: Roboto, "Noto Sans", sans-serif;
}
svg.oct {
  display: block;
  flex: none;
  fill: currentColor;
}
.toolbar svg.oct:nth-child(n+11) {
  margin-left: 3px;
}
.side-section:nth-child(n+3) svg.oct {
  transform: translateY(-2px);
}
</style>
